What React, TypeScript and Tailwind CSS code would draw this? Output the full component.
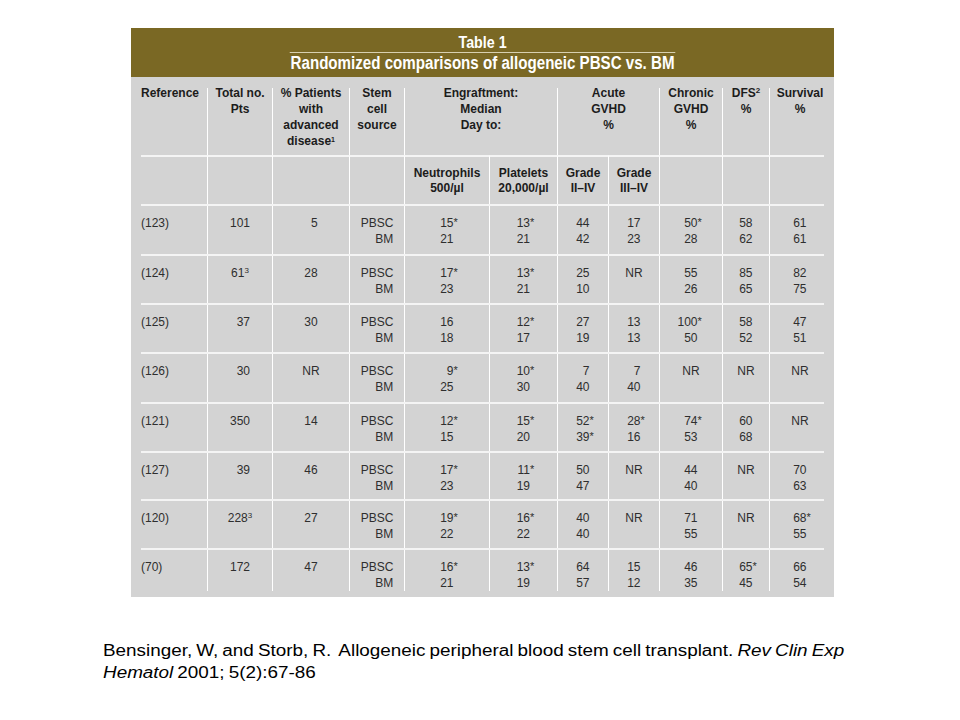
type Row = {
  ref: string;
  pts: string;
  ptsSup?: string;
  adv: string;
  h: string;
  neut: string[];
  plat: string[];
  g2: string[];
  g3: string[];
  chr: string[];
  dfs: string[];
  surv: string[];
};

const FIG = "\u2007";

const rows: Row[] = [
  { ref: "(123)", pts: "101", adv: FIG + "5", h: "h-[50px]", neut: ["15*", "21"], plat: ["13*", "21"], g2: ["44", "42"], g3: ["17", "23"], chr: ["50*", "28"], dfs: ["58", "62"], surv: ["61", "61"] },
  { ref: "(124)", pts: "61", ptsSup: "3", adv: "28", h: "h-[49px]", neut: ["17*", "23"], plat: ["13*", "21"], g2: ["25", "10"], g3: ["NR"], chr: ["55", "26"], dfs: ["85", "65"], surv: ["82", "75"] },
  { ref: "(125)", pts: FIG + "37", adv: "30", h: "h-[49px]", neut: ["16", "18"], plat: ["12*", "17"], g2: ["27", "19"], g3: ["13", "13"], chr: ["100*", "50"], dfs: ["58", "52"], surv: ["47", "51"] },
  { ref: "(126)", pts: FIG + "30", adv: "NR", h: "h-[50px]", neut: ["9*", "25"], plat: ["10*", "30"], g2: ["7", "40"], g3: ["7", "40"], chr: ["NR"], dfs: ["NR"], surv: ["NR"] },
  { ref: "(121)", pts: "350", adv: "14", h: "h-[49px]", neut: ["12*", "15"], plat: ["15*", "20"], g2: ["52*", "39*"], g3: ["28*", "16"], chr: ["74*", "53"], dfs: ["60", "68"], surv: ["NR"] },
  { ref: "(127)", pts: FIG + "39", adv: "46", h: "h-[48px]", neut: ["17*", "23"], plat: ["11*", "19"], g2: ["50", "47"], g3: ["NR"], chr: ["44", "40"], dfs: ["NR"], surv: ["70", "63"] },
  { ref: "(120)", pts: "228", ptsSup: "3", adv: "27", h: "h-[49px]", neut: ["19*", "22"], plat: ["16*", "22"], g2: ["40", "40"], g3: ["NR"], chr: ["71", "55"], dfs: ["NR"], surv: ["68*", "55"] },
  { ref: "(70)", pts: "172", adv: "47", h: "h-[37px]", neut: ["16*", "21"], plat: ["13*", "19"], g2: ["64", "57"], g3: ["15", "12"], chr: ["46", "35"], dfs: ["65*", "45"], surv: ["66", "54"] },
];

// number right-aligned in a two-digit box, asterisk hanging to the right
function Val({ v }: { v: string }) {
  if (v === "NR") return <div className="text-center">NR</div>;
  const star = v.endsWith("*");
  const num = star ? v.slice(0, -1) : v;
  return (
    <div className="flex justify-center">
      <div className="relative flex w-[13px] justify-end whitespace-nowrap">
        {num}
        {star && <span className="absolute left-full top-[-1px] text-[11px]">*</span>}
      </div>
    </div>
  );
}

function Pair({ vals, last }: { vals: string[]; last?: boolean }) {
  return (
    <div className={last ? "border-l border-white pl-[6px] pt-[9px]" : "border-l border-white pt-[9px]"}>
      {vals.map((v, i) => (
        <Val key={i} v={v} />
      ))}
    </div>
  );
}

const head = "border-l border-white text-center font-bold text-[#1c1c1c]";
const sub = "border-l border-t-2 border-l-white border-t-[#f4f4f4]";
const subText = sub + " pt-[9px] text-center font-bold leading-[15px] text-[#1c1c1c]";

export default function App() {
  return (
    <div className="h-[720px] w-[960px] overflow-hidden bg-white pt-[28px] font-['Liberation_Sans',Arial,sans-serif]">
      <div className="ml-[131px] w-[703px]">
        <div className="flex h-[49px] justify-center bg-[#7a6824] pt-[5px] font-bold text-white">
          <div className="flex scale-x-[0.84] flex-col items-center">
            <div className="text-[17px] leading-[19px]">Table 1</div>
            <div className="border-t border-[#d8d0b0] px-[1px] text-[18px] leading-[20px]">
              Randomized comparisons of allogeneic PBSC vs. BM
            </div>
          </div>
        </div>

        <div className="bg-[#d3d3d3] px-[10px] pb-[12px] pt-[11px] text-[12px] leading-[16px] text-[#2e2e2e]">
          <div className="grid grid-cols-[66px_65px_77px_55px_85px_68px_51px_51px_63px_47px_55px]">
            {/* header row */}
            <div className="h-[67px] font-bold text-[#1c1c1c]">
              <div className="-mt-[3px]">Reference</div>
            </div>
            <div className={head}>
              <div className="-mt-[3px]">Total no.<br />Pts</div>
            </div>
            <div className={head}>
              <div className="-mt-[3px]">
                % Patients<br />with<br />advanced<br />disease<sup className="text-[7px]">1</sup>
              </div>
            </div>
            <div className={head}>
              <div className="-mt-[3px]">Stem<br />cell<br />source</div>
            </div>
            <div className={head + " col-span-2"}>
              <div className="-mt-[3px]">Engraftment:<br />Median<br />Day to:</div>
            </div>
            <div className={head + " col-span-2"}>
              <div className="-mt-[3px]">Acute<br />GVHD<br />%</div>
            </div>
            <div className={head}>
              <div className="-mt-[3px]">Chronic<br />GVHD<br />%</div>
            </div>
            <div className={head}>
              <div className="-mt-[3px]">DFS<sup className="text-[8px]">2</sup><br />%</div>
            </div>
            <div className={head + " pl-[6px]"}>
              <div className="-mt-[3px]">Survival<br />%</div>
            </div>

            {/* sub header row */}
            <div className="h-[49px] border-t-2 border-[#f4f4f4]" />
            <div className={sub} />
            <div className={sub} />
            <div className={sub} />
            <div className={subText}>Neutrophils<br />500/µl</div>
            <div className={subText}>Platelets<br />20,000/µl</div>
            <div className={subText}>Grade<br />II–IV</div>
            <div className={subText}>Grade<br />III–IV</div>
            <div className={sub} />
            <div className={sub} />
            <div className={sub} />

            {/* body rows */}
            {rows.map((r) => (
              <div key={r.ref} className={"col-span-11 grid grid-cols-subgrid border-t-2 border-[#f4f4f4] " + r.h}>
                <div className="pt-[9px]">{r.ref}</div>
                <div className="border-l border-white pt-[9px] text-center">
                  {r.pts}
                  {r.ptsSup && <sup className="text-[8px]">{r.ptsSup}</sup>}
                </div>
                <div className="border-l border-white pt-[9px] text-center">{r.adv}</div>
                <div className="flex justify-center border-l border-white pt-[9px]">
                  <div className="text-right">PBSC<br />BM</div>
                </div>
                <Pair vals={r.neut} />
                <Pair vals={r.plat} />
                <Pair vals={r.g2} />
                <Pair vals={r.g3} />
                <Pair vals={r.chr} />
                <Pair vals={r.dfs} />
                <Pair vals={r.surv} last />
              </div>
            ))}
          </div>
        </div>
      </div>

      <div className="ml-[103px] mt-[43px] w-fit origin-left scale-x-[1.18] whitespace-pre text-[16px] leading-[22px] text-black [word-spacing:-1px]">
        Bensinger, W, and Storb, R.  Allogeneic peripheral blood stem cell transplant. <i>Rev Clin Exp</i>
        <br />
        <i>Hematol</i> 2001; 5(2):67-86
      </div>
    </div>
  );
}
